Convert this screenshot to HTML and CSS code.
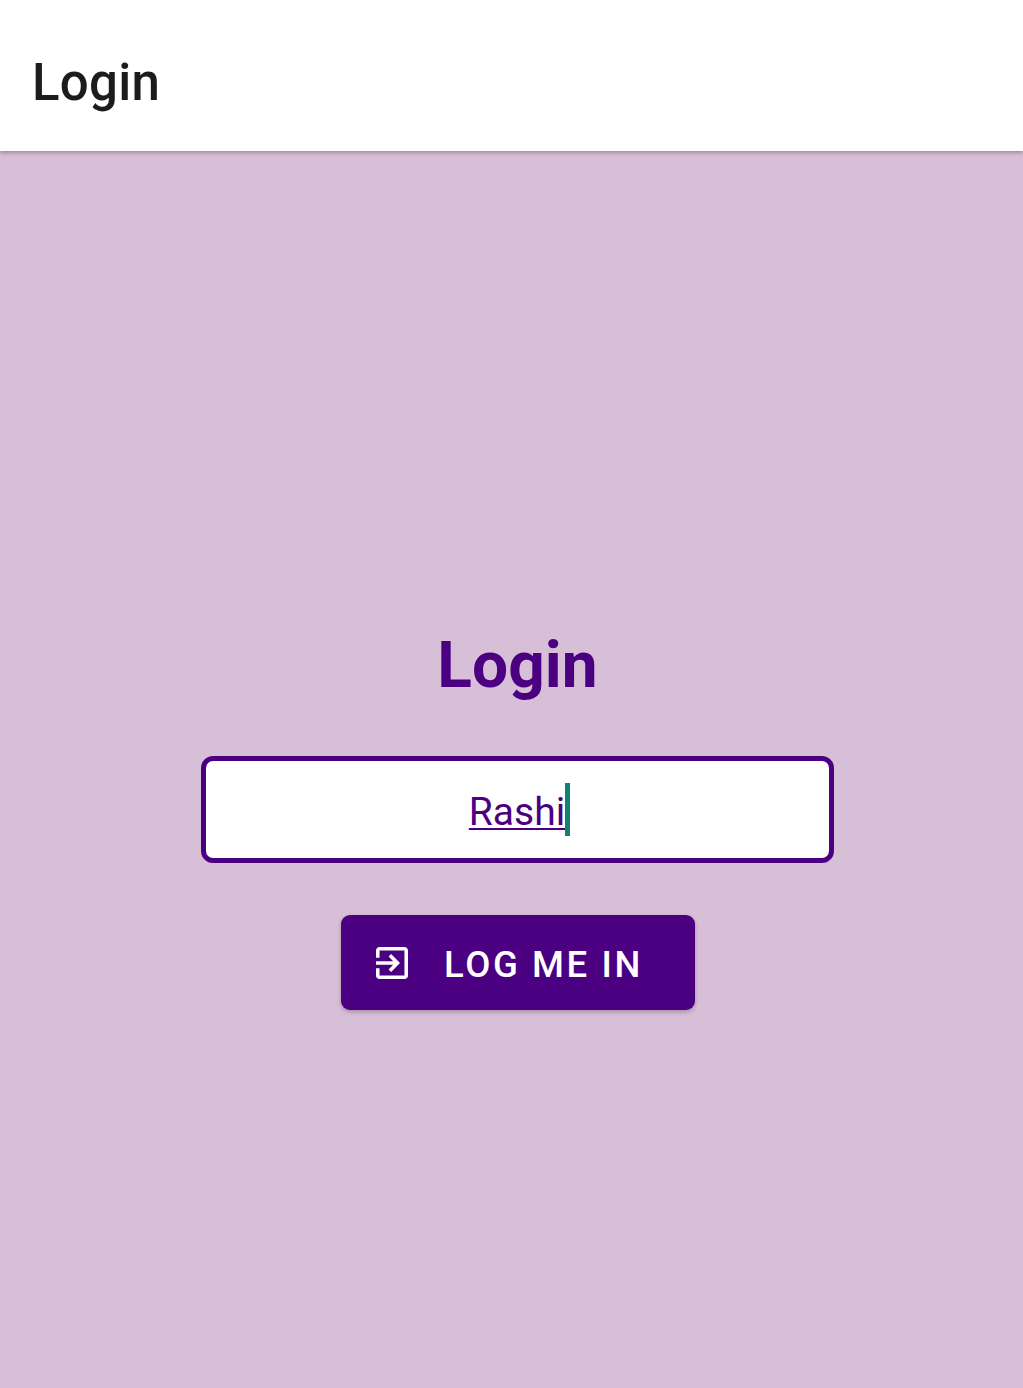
FILE: index.html
```html
<!DOCTYPE html>
<html lang="en">
<head>
<meta charset="utf-8">
<title>Login</title>
<link rel="stylesheet" href="styles.css">
</head>
<body>
<header class="app-bar"><h1 class="app-title">Login</h1></header>
<main class="login">
  <h2 class="heading">Login</h2>
  <div class="field"><span class="value">Rashi</span><span class="caret"></span></div>
  <button class="submit" type="button">
    <svg class="icon" viewBox="3 3 18 18" fill="currentColor" aria-hidden="true"><path d="M10.09 15.59L11.5 17l5-5-5-5-1.41 1.41L12.67 11H3v2h9.67l-2.58 2.59zM19 3H5c-1.11 0-2 .9-2 2v4h2V5h14v14H5v-4H3v4c0 1.1.89 2 2 2h14c1.1 0 2-.9 2-2V5c0-1.1-.9-2-2-2z"/></svg>
    <span class="label">LOG ME IN</span>
  </button>
</main>
</body>
</html>
```

FILE: styles.css
```css
* { box-sizing: border-box; }
body {
  margin: 0;
  min-height: 1388px;
  display: flex;
  flex-direction: column;
  background: #d8bfd8;
  font-family: Roboto, "Liberation Sans", sans-serif;
}
.app-bar {
  height: 151px;
  padding: 53px 32px 0;
  background: #fff;
  box-shadow: 0 2px 4px rgba(0, 0, 0, 0.28);
}
.app-title {
  margin: 0;
  font-size: 51px;
  line-height: 60px;
  font-weight: 500;
  letter-spacing: 0.25px;
  color: #1c1c1e;
}
.login {
  display: flex;
  flex-direction: column;
  align-items: center;
  padding: 475px 0 0 12px;
}
.heading {
  margin: 0;
  font-size: 64px;
  line-height: 80px;
  font-weight: 700;
  letter-spacing: 0.1px;
  color: #4b0082;
}
.field {
  width: 633px;
  height: 107px;
  margin-top: 50px;
  padding: 0 0 1px 4px;
  display: flex;
  align-items: center;
  justify-content: center;
  border: 5px solid #4b0082;
  border-radius: 12px;
  background: #fff;
  color: #4b0082;
  font-size: 39px;
}
.value {
  padding-top: 5px;
  text-decoration: underline;
  text-decoration-thickness: 2px;
  text-underline-offset: 3px;
}
.caret {
  width: 5px;
  height: 53px;
  background: #138173;
}
.submit {
  width: 354px;
  height: 95px;
  margin: 52px 0 0 1px;
  padding: 0 0 0 35px;
  display: flex;
  align-items: center;
  gap: 36px;
  border: 0;
  border-radius: 9px;
  background: #4b0082;
  color: #fff;
  box-shadow: 0 2px 4px rgba(0, 0, 0, 0.25);
  font-family: inherit;
  font-size: 36.5px;
  font-weight: 500;
  letter-spacing: 2.6px;
}
.icon { width: 32px; height: 32px; }
.label { padding-top: 4px; }
```
